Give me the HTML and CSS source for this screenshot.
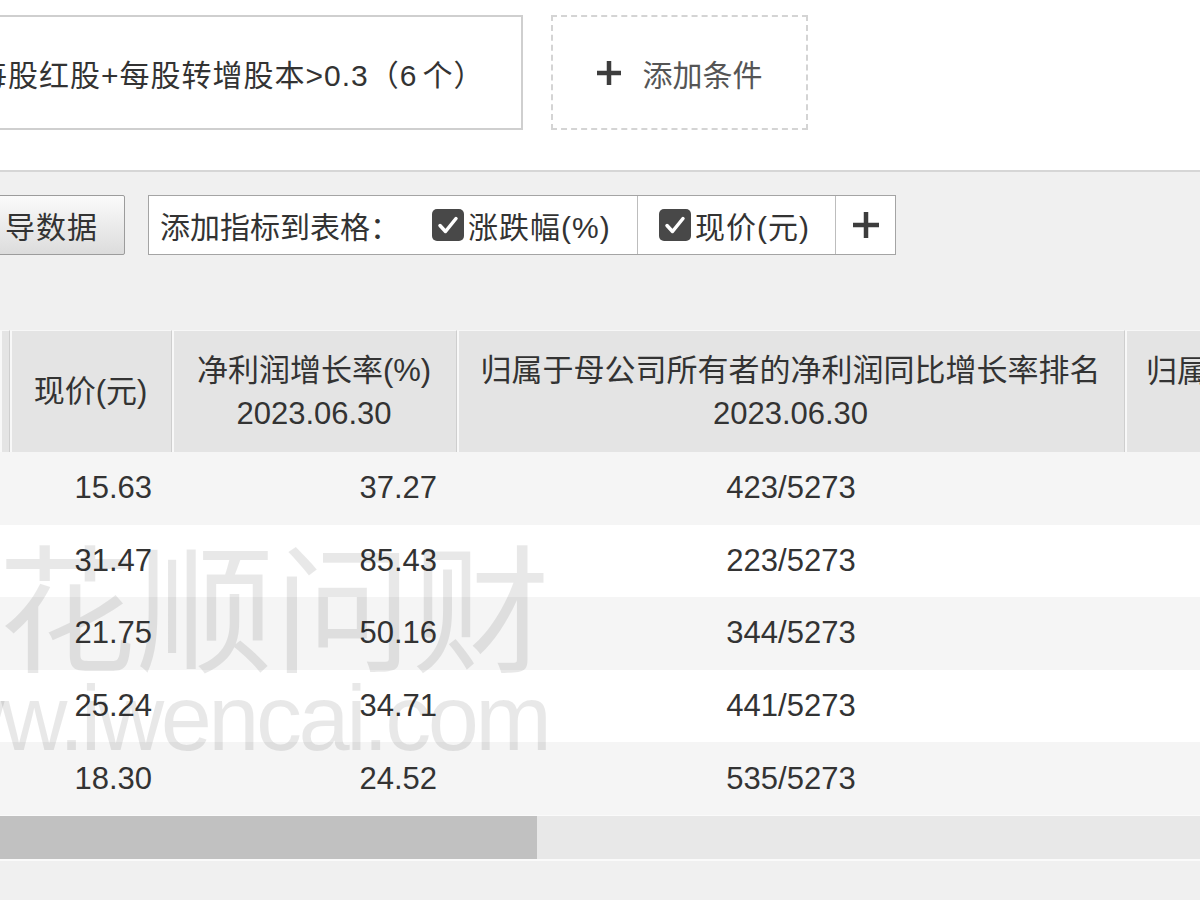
FILE: index.html
```html
<!DOCTYPE html>
<html lang="zh-CN">
<head>
    <meta charset="utf-8">
    <meta name="viewport" content="width=device-width, initial-scale=1">
    <title>选股结果</title>
    <link rel="stylesheet" href="styles.css">
</head>
<body>
    <div class="conditions">
        <div class="cond">每股红股+每股转增股本&gt;0.3（6<span class="gap">个</span>）</div>
        <div class="cond-add">
            <svg class="plus" width="24" height="24" viewBox="0 0 24 24"><rect x="9.75" y="0" width="4.5" height="24"/><rect x="0" y="9.75" width="24" height="4.5"/></svg>
            <span>添加条件</span>
        </div>
    </div>

    <div class="panel">
        <div class="toolbar">
            <button class="btn-export">导数据</button>
            <div class="indicators">
                <span class="ind-label">添加指标到表格：</span>
                <label class="ind-item first">
                    <svg class="check" width="32" height="32" viewBox="0 0 32 32"><rect width="32" height="32" rx="5"/><polyline points="8,16.5 13.5,22.5 24,9.5"/></svg>
                    涨跌幅(%)
                </label>
                <label class="ind-item second">
                    <svg class="check" width="32" height="32" viewBox="0 0 32 32"><rect width="32" height="32" rx="5"/><polyline points="8,16.5 13.5,22.5 24,9.5"/></svg>
                    现价(元)
                </label>
                <span class="ind-add">
                    <svg class="plus" width="26" height="26" viewBox="0 0 26 26"><rect x="10.75" y="0" width="4.5" height="26"/><rect x="0" y="10.75" width="26" height="4.5"/></svg>
                </span>
            </div>
        </div>

        <div class="grid-wrap">
            <table class="grid">
                <colgroup>
                    <col style="width:10px">
                    <col style="width:162px">
                    <col style="width:285px">
                    <col style="width:668px">
                    <col style="width:175px">
                </colgroup>
                <thead>
                    <tr>
                        <th></th>
                        <th>现价(元)</th>
                        <th>净利润增长率(%)<br>2023.06.30</th>
                        <th>归属于母公司所有者的净利润同比增长率排名<br>2023.06.30</th>
                        <th class="cut">归属于母公司所有者的净利润</th>
                    </tr>
                </thead>
                <tbody>
                    <tr><td></td><td class="num">15.63</td><td class="num">37.27</td><td class="rank">423/5273</td><td></td></tr>
                    <tr><td></td><td class="num">31.47</td><td class="num">85.43</td><td class="rank">223/5273</td><td></td></tr>
                    <tr><td></td><td class="num">21.75</td><td class="num">50.16</td><td class="rank">344/5273</td><td></td></tr>
                    <tr><td></td><td class="num">25.24</td><td class="num">34.71</td><td class="rank">441/5273</td><td></td></tr>
                    <tr><td></td><td class="num">18.30</td><td class="num">24.52</td><td class="rank">535/5273</td><td></td></tr>
                </tbody>
            </table>
            <!-- site watermark over the grid -->
            <div class="wm wm-name">同花顺问财</div>
            <div class="wm wm-url">www.iwencai.com</div>
        </div>

        <div class="hscroll"><div class="thumb"></div></div>
    </div>
</body>
</html>
```

FILE: styles.css
```css
* {
  box-sizing: border-box;
}

body {
  margin: 0;
  width: 1200px;
  height: 900px;
  overflow: hidden;
  background: #f0f0f0;
  font-family: "Liberation Sans", "Noto Sans CJK SC", sans-serif;
  color: #333;
}

/* condition strip */
.conditions {
  height: 170px;
  background: #fff;
  display: flex;
  align-items: flex-start;
  gap: 28px;
  padding-top: 15px;
}
.cond {
  margin-left: -40px;
  flex: 0 0 563px;
  height: 115px;
  border: 2px solid #cfcfcf;
  padding-left: 15px;
  display: flex;
  align-items: center;
  font-size: 30px;
  letter-spacing: 1px;
  white-space: nowrap;
}
.cond .gap {
  margin-left: 5px;
}
.cond-add {
  flex: 0 0 257px;
  height: 115px;
  border: 2px dashed #d4d4d4;
  display: flex;
  align-items: center;
  justify-content: center;
  gap: 22px;
  font-size: 30px;
  color: #555;
}
.plus {
  fill: #3d3d3d;
}

/* grey working area */
.panel {
  border-top: 2px solid #d6d6d6;
  height: 730px;
}
.toolbar {
  height: 158px;
  padding-top: 23px;
  display: flex;
  align-items: flex-start;
  gap: 23px;
}
.btn-export {
  margin-left: -40px;
  width: 165px;
  height: 60px;
  border: 1px solid #9c9c9c;
  border-radius: 2px;
  background: linear-gradient(#fbfbfb, #dcdcdc);
  font-family: inherit;
  font-size: 30px;
  letter-spacing: 1px;
  color: #333;
  text-align: right;
  padding: 0 26px 0 0;
}
.indicators {
  width: 748px;
  height: 60px;
  border: 1px solid #a4a4a4;
  background: #fff;
  display: flex;
  font-size: 30px;
  white-space: nowrap;
}
.ind-label {
  flex: 0 0 257px;
  padding-left: 11px;
  display: flex;
  align-items: center;
}
.ind-item {
  display: flex;
  align-items: center;
  gap: 4px;
  letter-spacing: 1px;
}
.ind-item.first {
  flex: 0 0 231px;
  padding-left: 26px;
}
.ind-item.second {
  flex: 0 0 198px;
  padding-left: 21px;
  border-left: 1px solid #bdbdbd;
}
.ind-add {
  flex: 0 0 60px;
  border-left: 1px solid #bdbdbd;
  display: flex;
  align-items: center;
  justify-content: center;
}
.check rect {
  fill: #484848;
}
.check polyline {
  fill: none;
  stroke: #fff;
  stroke-width: 3.5;
  stroke-linecap: round;
  stroke-linejoin: round;
}

/* result grid */
.grid-wrap {
  position: relative;
  height: 485px;
  overflow: hidden;
}
.grid {
  width: 1300px;
  table-layout: fixed;
  border-collapse: separate;
  border-spacing: 0;
  font-size: 31px;
}
.grid th {
  height: 122px;
  padding: 0;
  background: #e4e4e4;
  border-top: 1px solid #f7f7f7;
  border-right: 1px solid #cecece;
  box-shadow: inset 2px 0 0 #f8f8f8;
  font-weight: normal;
  line-height: 43px;
  text-align: center;
  vertical-align: middle;
  white-space: nowrap;
  overflow: hidden;
}
.grid th.cut {
  text-align: left;
  padding-left: 21px;
  vertical-align: top;
  padding-top: 19px;
}
.grid td {
  height: 72.6px;
  padding: 0;
  background: #f5f5f5;
  white-space: nowrap;
}
.grid tbody tr:nth-child(even) td {
  background: #fff;
}
.grid td.num {
  text-align: right;
  padding-right: 20px;
}
.grid td.rank {
  text-align: center;
}

.wm {
  position: absolute;
  line-height: 1;
  white-space: nowrap;
  color: rgba(0, 0, 0, 0.09);
  pointer-events: none;
}
.wm-name {
  left: -140px;
  top: 214px;
  font-size: 138px;
}
.wm-url {
  left: -125px;
  top: 342px;
  font-size: 92px;
  letter-spacing: -3.5px;
}

/* horizontal scroll bar */
.hscroll {
  height: 46px;
  background: #e8e8e8;
  border-top: 1px solid #fafafa;
  border-bottom: 2px solid #fafafa;
}
.thumb {
  width: 537px;
  height: 100%;
  background: #c1c1c1;
}
```
